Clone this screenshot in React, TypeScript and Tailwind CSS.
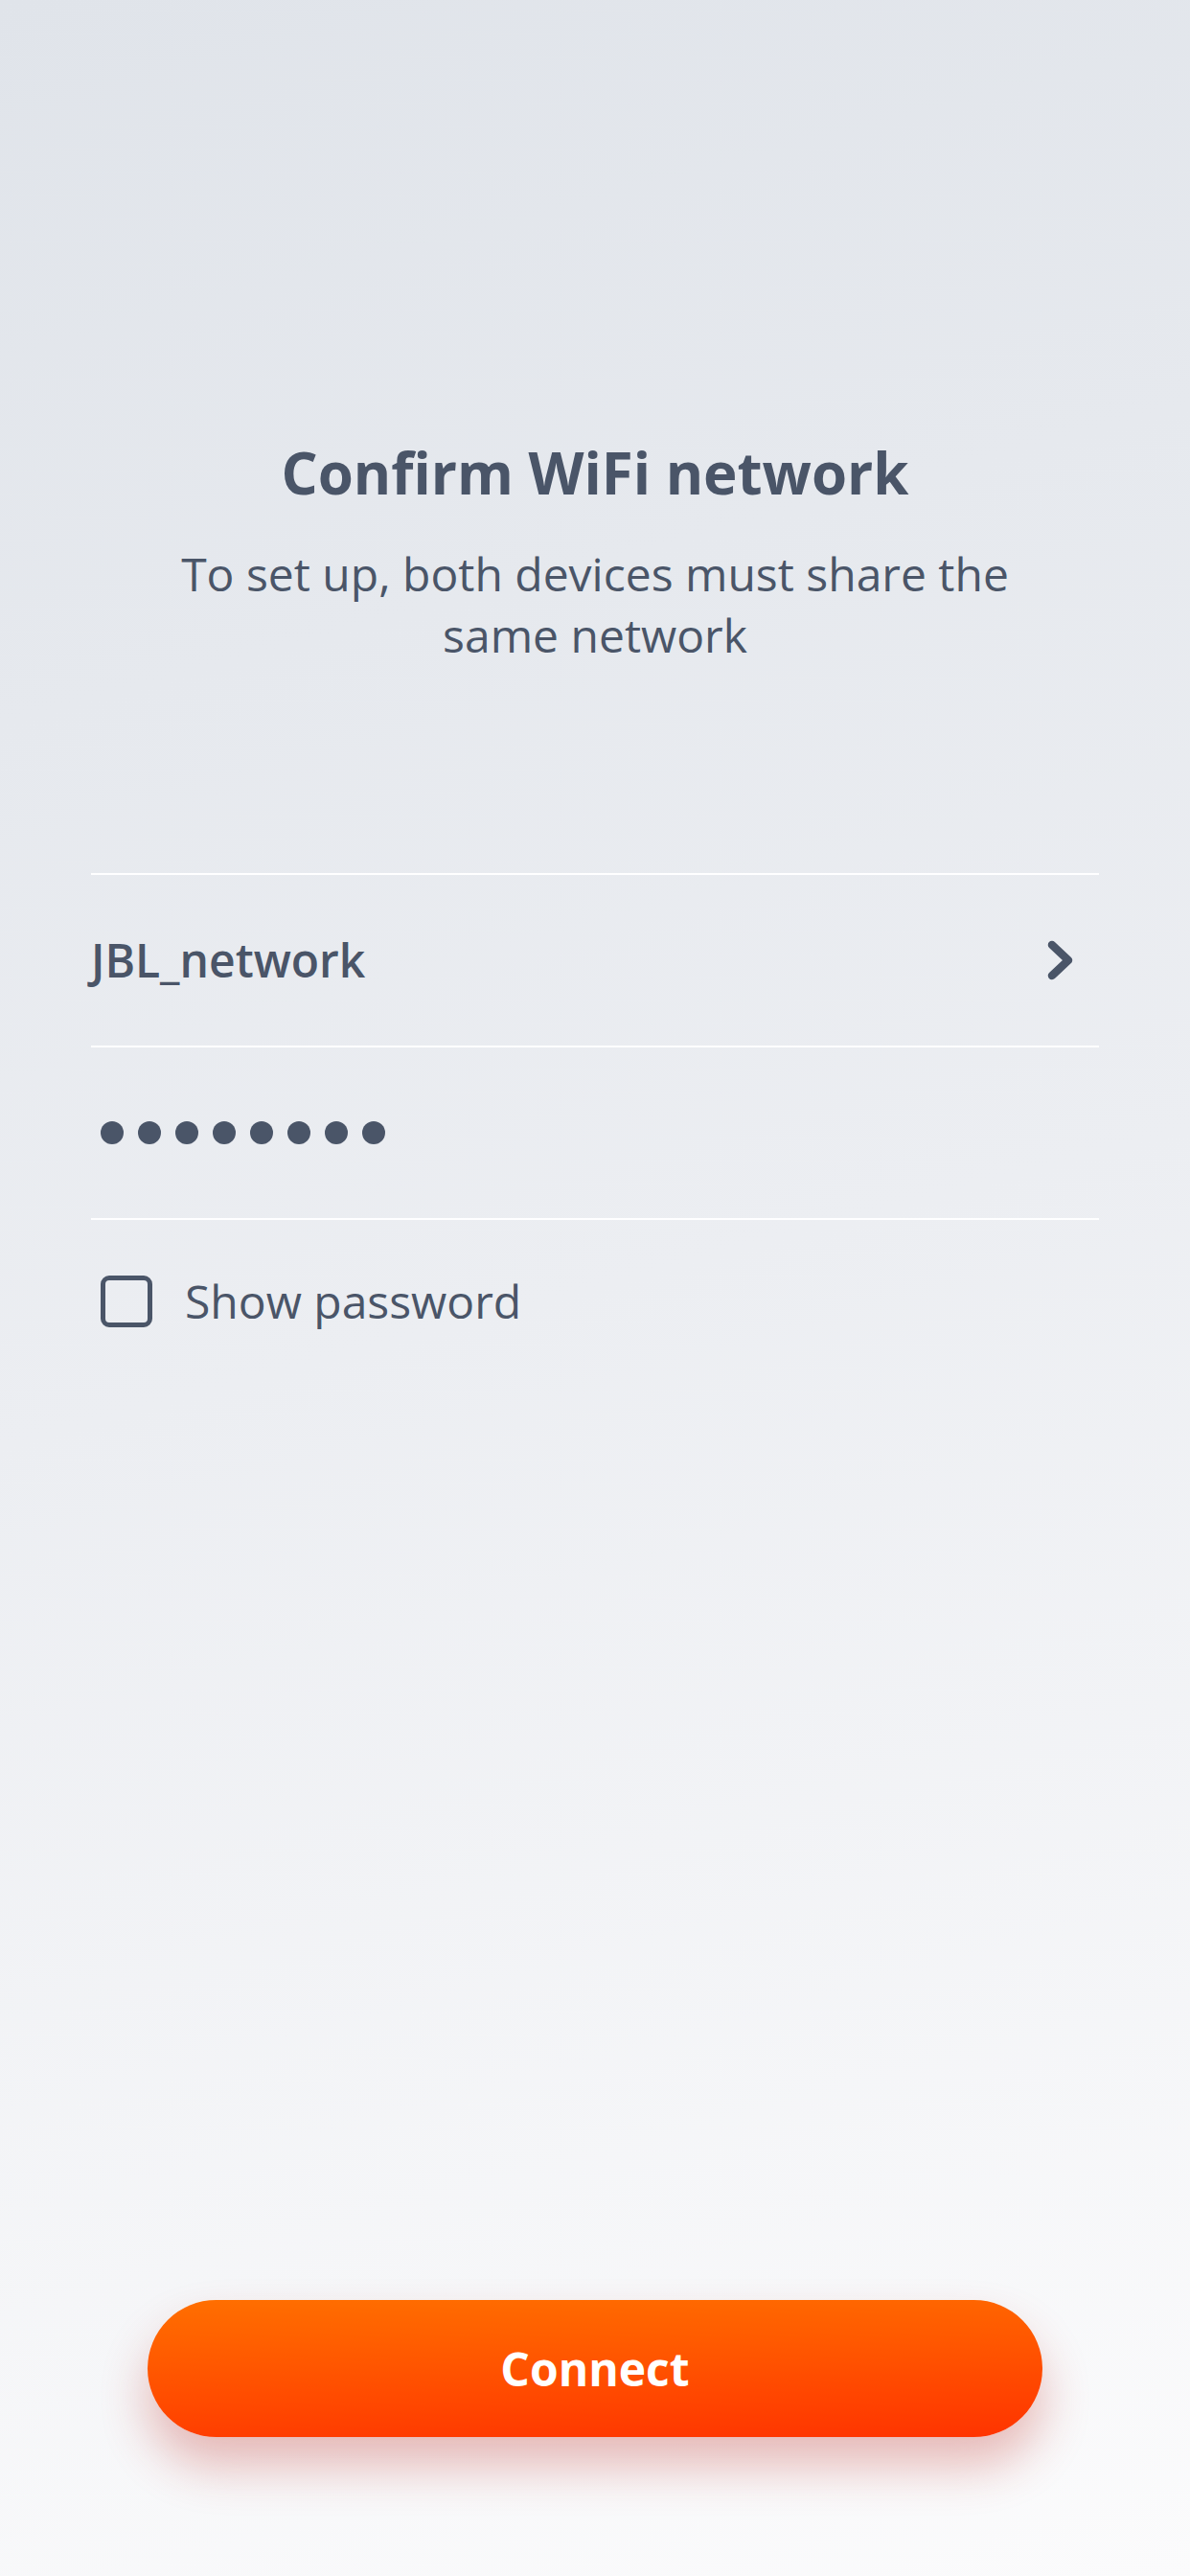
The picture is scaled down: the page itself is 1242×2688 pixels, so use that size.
export default function App() {
  return (
    <main
      className="h-[2688px] w-[1242px] flex flex-col bg-[linear-gradient(165deg,#e0e4ea_0%,#eceef2_50%,#fbfbfc_100%)] text-[#4a5568]"
      style={{ fontFamily: '"Open Sans", "Noto Sans", sans-serif' }}
    >
      {/* Header */}
      <div className="pt-[453px] flex flex-col items-center">
        <h1 className="text-[60px] leading-[80px] font-bold text-center">Confirm WiFi network</h1>
        <p className="mt-[34px] max-w-[900px] text-[48px] leading-[64px] text-center">
          To set up, both devices must share the same network
        </p>
      </div>

      {/* Form */}
      <div className="mx-[95px] mt-[216px]">
        <div className="h-[180px] border-t-[2px] border-white flex items-center justify-between">
          <span className="text-[48px] leading-[64px] font-semibold">JBL_network</span>
          <svg width="40" height="48" viewBox="0 0 40 48" className="mr-[19px]" fill="none">
            <path d="M10 8 L27 24 L10 40" stroke="#4a5568" strokeWidth="8.5" strokeLinecap="round" strokeLinejoin="round" />
          </svg>
        </div>
        <div className="h-[180px] border-t-[2px] border-white flex items-center pl-[10px] gap-[15px]">
          {Array.from({ length: 8 }).map((_, i) => (
            <span key={i} className="w-[24px] h-[24px] rounded-full bg-[#4a5568]" />
          ))}
        </div>
        <div className="border-t-[2px] border-white" />

        <label className="mt-[53px] h-[64px] flex items-center pl-[10px] gap-[34px]">
          <span className="w-[54px] h-[54px] rounded-[9px] border-[5px] border-[#4a5568]" />
          <span className="text-[48px] leading-[64px]">Show password</span>
        </label>
      </div>

      {/* Action */}
      <div className="mt-auto mb-[145px] flex justify-center">
        <button className="w-[934px] h-[143px] rounded-full bg-[linear-gradient(178deg,#ff6f00_0%,#ff5200_50%,#ff3300_100%)] shadow-[0_30px_50px_rgba(190,40,30,0.3)] text-white text-[48px] font-bold">
          Connect
        </button>
      </div>
    </main>
  );
}
